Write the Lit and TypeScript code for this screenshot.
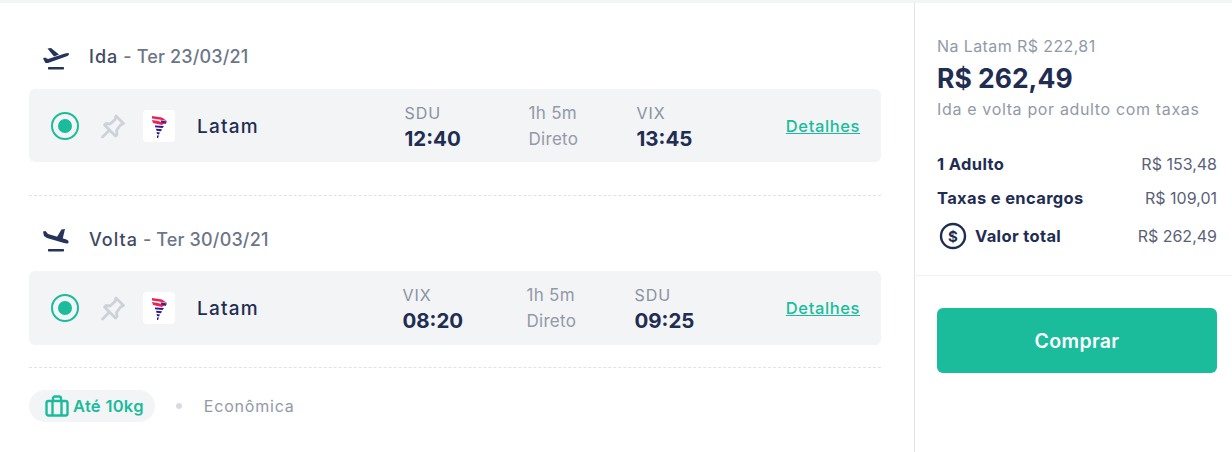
import { LitElement, html, css, svg } from "lit";
import { customElement } from "lit/decorators.js";

const logo = html`<span class="logo"><svg width="32" height="32" viewBox="0 0 32 32">
  <g fill="#f0204f"><path d="M9 6l10 1.500 5 3.500-8-1.500-7-1z"/><path d="M9 10l6 1 6.500 2-2.500 2-9-2z"/></g>
  <g fill="#2a1a8e"><path d="M17.500 10.300l6.500 1.200-1.500 2.500-4-1.300z" fill="#4a1c8c"/><path d="M12 15.500l9 .5-1.500 2-7.500-.8z"/><path d="M13 18.800l6 .5-1 2-4.500-.6z"/><path d="M13.500 22l3.500.5-1 2-2-.4z"/><path d="M14 25.500h2l-1 2.500h-1z"/></g>
</svg></span>`;

const pin = html`<svg class="pin" width="26" height="26" viewBox="0 0 26 26" fill="none" stroke="#cdd1d9" stroke-width="2.800" stroke-linejoin="round" stroke-linecap="round">
  <path d="M16 3l7.500 7.500-3 1.500-4 5.500.5 4-1.500 1.500-11-11 1.500-1.500 4 .5 5-4.500z"/><path d="M8.500 18l-6 6"/>
</svg>`;

const takeoff = svg`<path d="M2 16.500l2-1 3 1.500 17-5.500c3-1 4.500-.5 4 .8-.3 1.200-1.500 1.700-3.500 2.500L7 21H4.500z"/><path d="M6.500 6.500l3.500-.5 8 6.500-5 2z"/><rect x="7" y="25" width="16" height="2.400" rx=".6"/>`;
const landing = svg`<path d="M2 6.500l2.500-.5 2.500 3 17 5c3 1 4 2 3.500 3.500s-2.500 1-4.500.5L6 13l-3-2z"/><path d="M20.500 4.500l3.500-.5-2.500 10.500-6-1.800z"/><rect x="7" y="24" width="16" height="2.400" rx=".6"/>`;

interface Leg { cls: string; label: string; date: string; icon: unknown; from: string; dep: string; to: string; arr: string; }
const legs: Leg[] = [
  { cls: "out", label: "Ida", date: "Ter 23/03/21", icon: takeoff, from: "SDU", dep: "12:40", to: "VIX", arr: "13:45" },
  { cls: "back", label: "Volta", date: "Ter 30/03/21", icon: landing, from: "VIX", dep: "08:20", to: "SDU", arr: "09:25" },
];

@customElement("app-root")
export class AppRoot extends LitElement {
  static styles = css`
    :host { display: block; width: 1232px; height: 452px; overflow: hidden; background: #fff; font-family: Inter, "Liberation Sans", sans-serif; color: #1f2d52; border-top: 3px solid #f3f4f6; box-sizing: border-box; }
    .page { display: flex; height: 449px; }
    .main { width: 915px; box-sizing: border-box; padding: 0 33px 0 29px; border-right: 1px solid #e2e4ea; flex: none; }
    .leg { display: flex; flex-direction: column; }
    .leg.out { height: 192px; }
    .leg.back { height: 171px; }
    .head { display: flex; align-items: center; height: 28px; margin-top: 39px; padding-left: 12px; font-size: 18px; font-weight: 500; color: #3f4a63; letter-spacing: .15px; }
    .back .head { margin-top: 29px; }
    .head svg { margin-right: 20px; flex: none; }
    .head .label { letter-spacing: 1px; }
    .head .date { color: #6c7688; margin-left: 5px; }
    .row { margin-top: 19px; height: 73px; background: #f3f4f6; border-radius: 6px; display: flex; align-items: center; justify-content: space-between; padding: 0 22px; }
    .back .row { margin-top: 18px; height: 74px; }
    .air { width: 260px; display: flex; align-items: center; }
    .radio { width: 28px; height: 28px; box-sizing: border-box; border: 2.5px solid #1abc9c; border-radius: 50%; display: flex; align-items: center; justify-content: center; flex: none; }
    .radio i { width: 14px; height: 14px; border-radius: 50%; background: #1abc9c; }
    .pin { margin-left: 21px; flex: none; }
    .logo { margin-left: 17px; width: 32px; height: 32px; background: #fff; border-radius: 4px; display: block; flex: none; }
    .logo svg { display: block; }
    .name { margin-left: 22px; padding-top: 1px; font-size: 19px; font-weight: 500; letter-spacing: 1.2px; color: #1f2d52; }
    .times { display: grid; grid-template-columns: 124px 108px auto; align-self: flex-start; margin-top: 7px; }
    .col { display: flex; flex-direction: column; padding-top: 7px; }
    .code { font-size: 16px; line-height: 20px; color: #8a91a2; letter-spacing: 1px; }
    .time { font-size: 20.500px; line-height: 32px; font-weight: 700; color: #1f2d52; }
    .col.dur { font-size: 17px; line-height: 26px; color: #9299a8; padding-top: 4px; letter-spacing: .3px; }
    .link { font-size: 16.500px; font-weight: 500; color: #1abc9c; text-decoration: underline; letter-spacing: .6px; margin-right: -1px; }
    .dash { border-top: 1px dashed #e0e2e6; }
    .foot { display: flex; align-items: center; margin-top: 22px; }
    .bag { display: flex; align-items: center; gap: 4px; height: 32px; padding: 0 11px 0 16px; border-radius: 16px; background: #f3f4f6; color: #1abc9c; font-size: 16.500px; font-weight: 600; letter-spacing: .3px; }
    .bag svg { margin-top: -1px; }
    .dot { width: 6px; height: 6px; border-radius: 50%; background: #d8dbe2; margin: 0 22px 0 21px; }
    .eco { font-size: 16px; color: #9299a8; letter-spacing: .8px; margin-top: -1px; }
    .side { flex: 1; display: flex; flex-direction: column; }
    .sum { padding: 33px 15px 0 22px; height: 273px; box-sizing: border-box; border-bottom: 1px solid #f1f2f4; }
    .na { font-size: 16px; line-height: 20px; color: #9299a8; letter-spacing: .4px; }
    .price { font-size: 26.500px; line-height: 36px; font-weight: 700; color: #1f2d52; margin-top: 4px; }
    .sub { font-size: 16px; line-height: 20px; color: #9299a8; margin-top: 3px; letter-spacing: .65px; }
    .line { display: flex; justify-content: space-between; align-items: center; font-size: 16px; color: #5c5f78; height: 34px; }
    .line b { font-size: 16.500px; font-weight: 700; color: #1f2d52; display: flex; align-items: center; gap: 8px; letter-spacing: .35px; }
    .lines { margin-top: 28px; }
    .total svg { margin-left: 2px; }
    .total { height: 42px; }
    .buy { margin: 32px 15px 0 22px; height: 65px; border-radius: 6px; background: #1abc9c; color: #fff; display: flex; align-items: center; justify-content: center; font-size: 19.500px; font-weight: 600; letter-spacing: .35px; }
  `;

  private leg(l: Leg) {
    return html`<section class="leg ${l.cls}">
      <div class="head"><svg width="28" height="28" viewBox="0 0 28 28" fill="#27345a">${l.icon}</svg><span class="label">${l.label}</span><span class="date">- ${l.date}</span></div>
      <div class="row">
        <div class="air"><span class="radio"><i></i></span>${pin}${logo}<span class="name">Latam</span></div>
        <div class="times">
          <div class="col"><span class="code">${l.from}</span><span class="time">${l.dep}</span></div>
          <div class="col dur"><span>1h 5m</span><span>Direto</span></div>
          <div class="col"><span class="code">${l.to}</span><span class="time">${l.arr}</span></div>
        </div>
        <span class="link">Detalhes</span>
      </div>
    </section>`;
  }

  render() {
    return html`<div class="page">
      <div class="main">
        ${this.leg(legs[0])}<div class="dash"></div>
        ${this.leg(legs[1])}<div class="dash"></div>
        <div class="foot">
          <span class="bag"><svg width="24" height="24" viewBox="0 0 24 24" fill="none" stroke="#1abc9c" stroke-width="2.400" stroke-linejoin="round"><rect x="1.500" y="7" width="21" height="14.500" rx="2"/><path d="M7.500 21.500V7M16.500 21.500V7M8 7V4.500A2 2 0 0 1 10 2.500h4a2 2 0 0 1 2 2V7"/></svg>Até 10kg</span>
          <span class="dot"></span><span class="eco">Econômica</span>
        </div>
      </div>
      <div class="side">
        <div class="sum">
          <div class="na">Na Latam R$ 222,81</div>
          <div class="price">R$ 262,49</div>
          <div class="sub">Ida e volta por adulto com taxas</div>
          <div class="lines">
            <div class="line"><b>1 Adulto</b><span>R$ 153,48</span></div>
            <div class="line"><b>Taxas e encargos</b><span>R$ 109,01</span></div>
            <div class="line total"><b><svg width="28" height="28" viewBox="0 0 28 28" fill="none"><circle cx="14" cy="14" r="12" stroke="#1f2d52" stroke-width="2.400"/><text x="14" y="19.500" text-anchor="middle" font-size="15" font-weight="700" fill="#1f2d52">$</text></svg>Valor total</b><span>R$ 262,49</span></div>
          </div>
        </div>
        <div class="buy">Comprar</div>
      </div>
    </div>`;
  }
}
